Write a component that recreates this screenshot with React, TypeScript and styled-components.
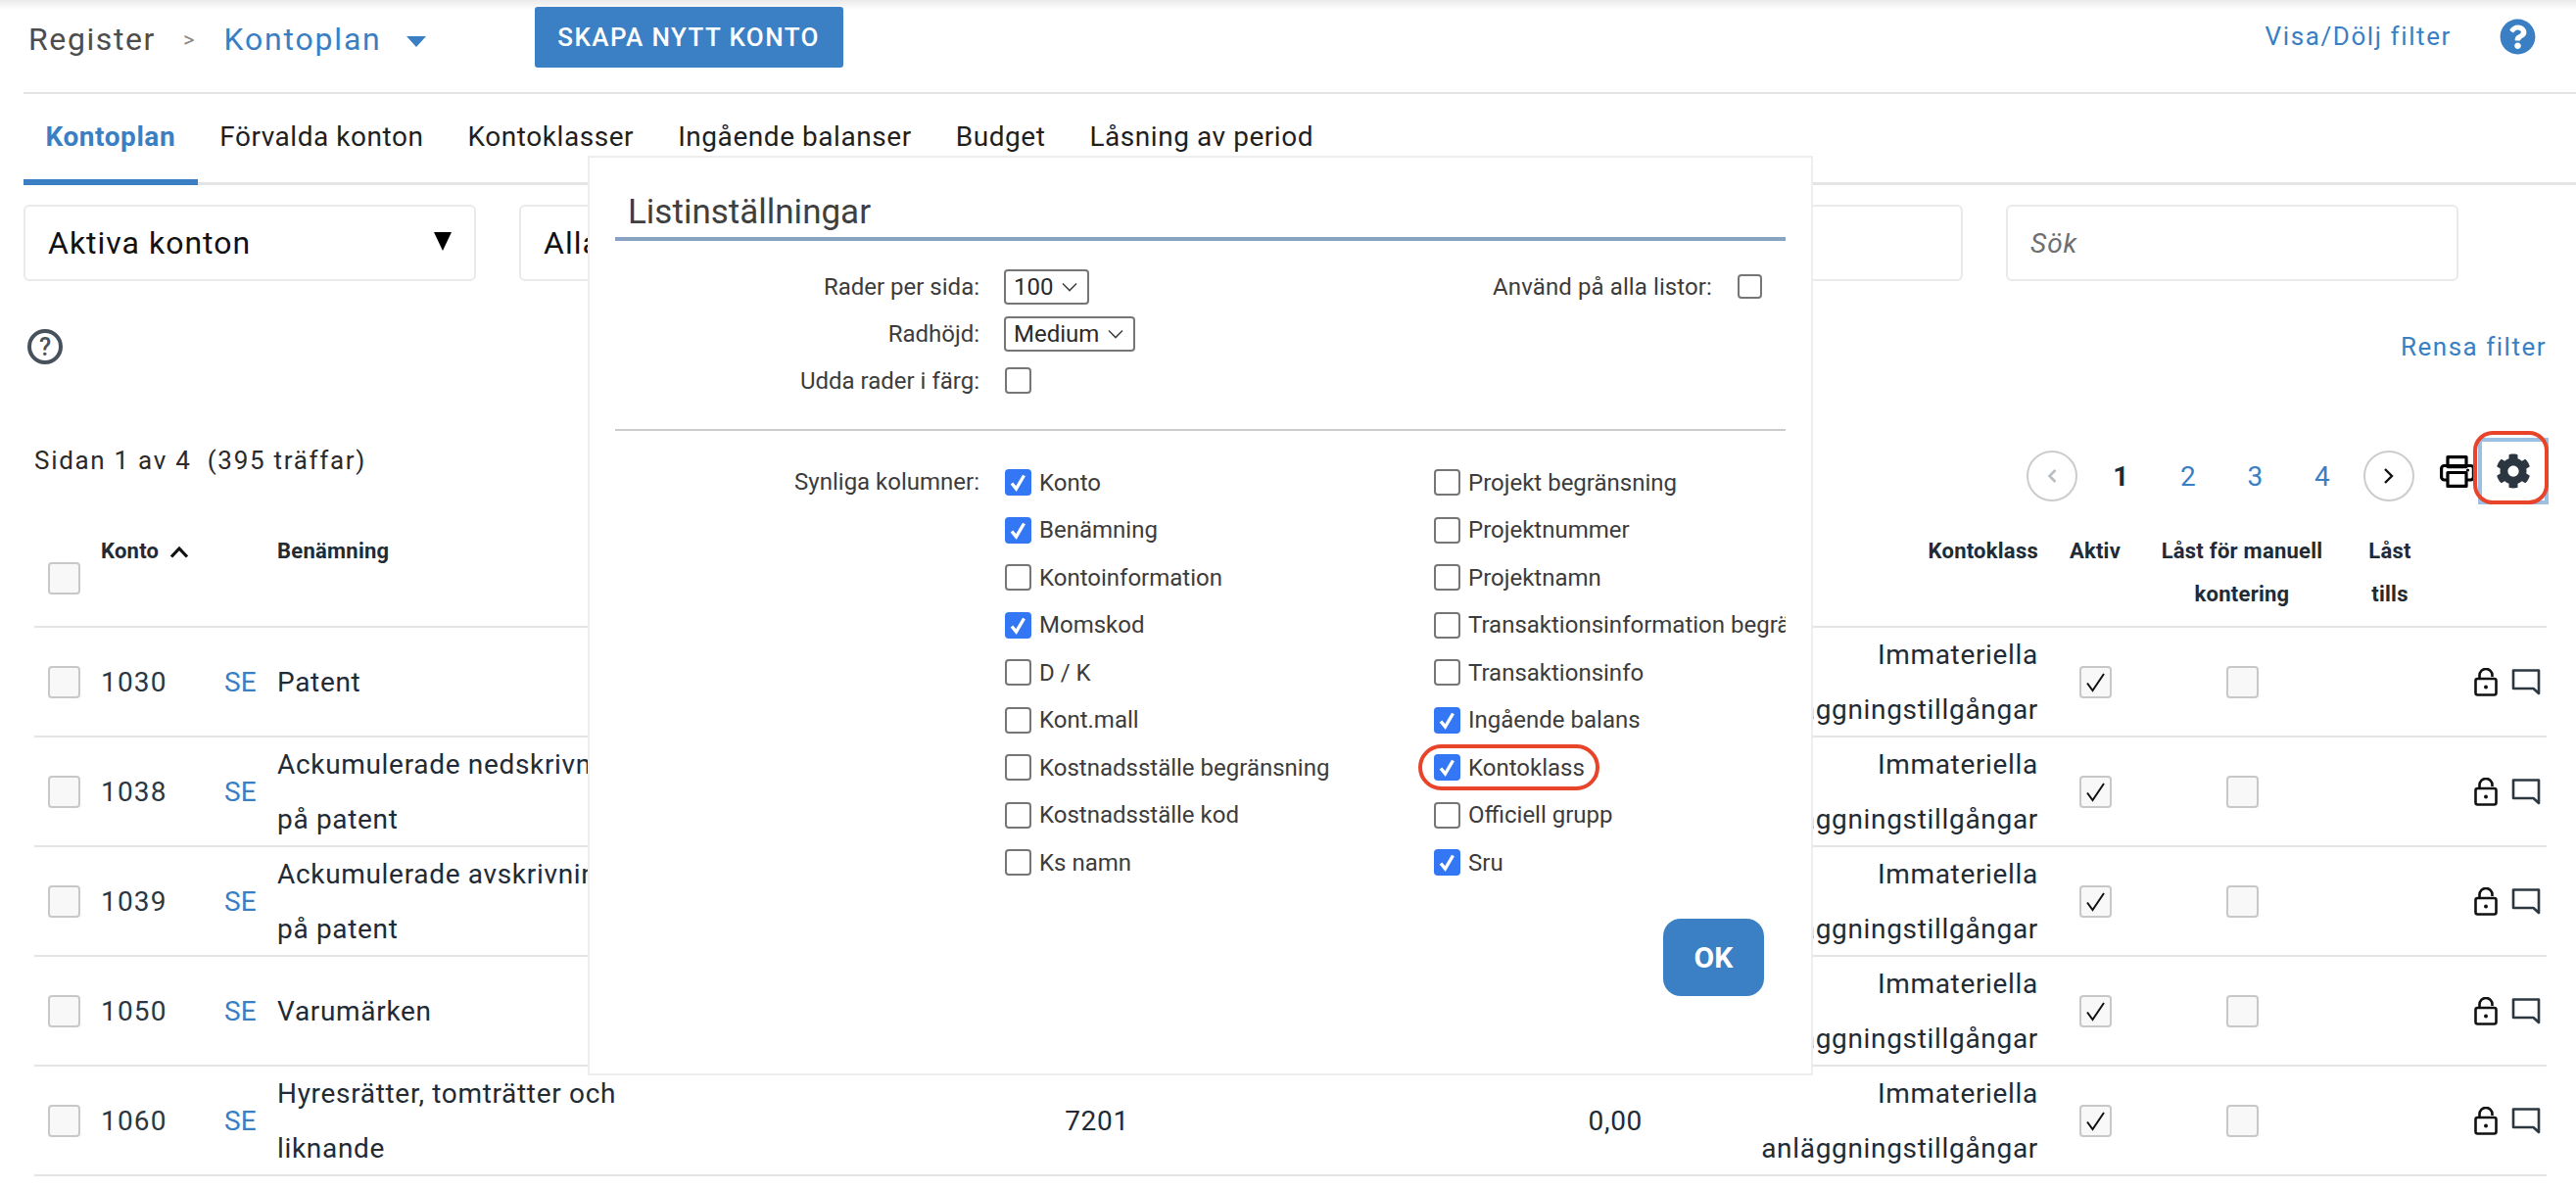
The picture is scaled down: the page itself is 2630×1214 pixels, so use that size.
import React from 'react';
import styled, { createGlobalStyle } from 'styled-components';
import { FaCog, FaQuestionCircle } from 'react-icons/fa';

const Global = createGlobalStyle`
  html, body { margin: 0; padding: 0; background: #fff; }
  body { font-family: Roboto, "Liberation Sans", sans-serif; color: #212b36; }
  * { box-sizing: border-box; }
`;

const Page = styled.div`
  position: relative;
  width: 2630px;
  height: 1214px;
  overflow: hidden;
  background: linear-gradient(#eaeaea 0, #fff 10px);
`;

const Header = styled.header`
  display: flex;
  align-items: center;
  height: 96px;
  margin-left: 24px;
  padding: 0 41px 14px 5px;
  border-bottom: 2px solid #e4e4e4;
`;
const Crumb = styled.span`
  font-size: 32px;
  letter-spacing: 1.6px;
  color: #4d4d4d;
`;
const CrumbSep = styled.span`
  font-size: 22px;
  color: #888;
  margin: 0 30px 0 28px;
`;
const CrumbLink = styled.span`
  font-size: 32px;
  letter-spacing: 1.8px;
  color: #3a7fc3;
`;
const CrumbCaret = styled.span`
  width: 0;
  height: 0;
  margin: 4px 0 0 25px;
  border-left: 10px solid transparent;
  border-right: 10px solid transparent;
  border-top: 11px solid #3a7fc3;
`;
const CreateButton = styled.button`
  position: relative;
  top: -2px;
  height: 62px;
  width: 315px;
  margin: 0 0 0 111px;
  border: 0;
  border-radius: 3px;
  background: #3b7fc4;
  color: #fff;
  font: 500 26px Roboto, sans-serif;
  letter-spacing: 1.4px;
`;
const Spacer = styled.div`flex: 1;`;
const FilterToggle = styled.span`
  margin: 0 49px 6px 0;
  font-size: 26px;
  letter-spacing: 1.6px;
  color: #3a7fc3;
`;
const HelpBadge = styled(FaQuestionCircle)`
  width: 37px;
  height: 37px;
  margin-bottom: 6px;
  color: #3a7fc3;
`;

const Tabs = styled.nav`
  display: flex;
  height: 93px;
  margin-left: 24px;
  border-bottom: 3px solid #e4e4e4;
`;
const Tab = styled.div<{ $active?: boolean }>`
  height: 93px;
  padding: 27px 22.5px 0;
  font-size: 28px;
  letter-spacing: 0.55px;
  font-weight: ${(p) => (p.$active ? 700 : 400)};
  color: ${(p) => (p.$active ? '#3a7fc3' : '#1f1f1f')};
  border-bottom: ${(p) => (p.$active ? '6px solid #3a7fc3' : '0')};
`;

const Filters = styled.div`
  display: flex;
  gap: 44px;
  margin: 20px 0 0 24px;
`;
const FilterBox = styled.div<{ $italic?: boolean }>`
  display: flex;
  align-items: center;
  justify-content: space-between;
  width: 462px;
  height: 78px;
  padding: 0 24px 0 23px;
  border: 2px solid #eaeaea;
  border-radius: 6px;
  font-size: ${(p) => (p.$italic ? '28px' : '32px')};
  font-style: ${(p) => (p.$italic ? 'italic' : 'normal')};
  color: ${(p) => (p.$italic ? '#6f6f6f' : '#111')};
  letter-spacing: 1px;
`;
const FilterArrow = styled.span`
  width: 0;
  height: 0;
  margin-right: -1px;
  margin-top: -4px;
  border-left: 9px solid transparent;
  border-right: 9px solid transparent;
  border-top: 19px solid #000;
`;

const FilterTools = styled.div`
  display: flex;
  align-items: center;
  justify-content: space-between;
  height: 36px;
  margin: 49px 30px 0 28px;
`;
const OutlineHelp = styled.span`
  display: flex;
  align-items: center;
  justify-content: center;
  width: 36px;
  height: 36px;
  border: 4px solid #46515c;
  border-radius: 50%;
  font-size: 25px;
  font-weight: 500;
  color: #46515c;
`;
const ClearLink = styled.span`
  font-size: 26px;
  letter-spacing: 1.5px;
  color: #3a7fc3;
`;

const ListBar = styled.div`
  display: flex;
  align-items: center;
  height: 52px;
  margin: 88px 28px 0 35px;
`;
const Count = styled.span`
  margin-bottom: 32px;
  font-size: 26px;
  letter-spacing: 1.7px;
  color: #2a2a2a;
  white-space: pre;
`;
const PageCircle = styled.span`
  display: flex;
  align-items: center;
  justify-content: center;
  width: 52px;
  height: 52px;
  border: 2px solid #ccc;
  border-radius: 50%;
`;
const PageNum = styled.span<{ $current?: boolean }>`
  width: 68.5px;
  text-align: center;
  font-size: 28px;
  font-weight: ${(p) => (p.$current ? 700 : 400)};
  color: ${(p) => (p.$current ? '#212b36' : '#3a7fc3')};
`;
const PageNums = styled.div`
  display: flex;
  margin: 0 8px 0 10px;
`;
const PrintIcon = styled.svg`
  flex: none;
  width: 36px;
  height: 33px;
  margin: -10px 0 0 26px;
`;
const GearBox = styled.span`
  display: flex;
  flex: none;
  align-items: center;
  justify-content: center;
  position: relative;
  width: 72px;
  height: 68px;
  margin: -10px 0 0 3px;
  border: 4px solid #9cc0e4;
  background: #fff;
`;
const GearIcon = styled(FaCog)`
  width: 36px;
  height: 36px;
  color: #2b3640;
`;
const GearRing = styled.span`
  position: absolute;
  left: -9px;
  top: -11px;
  width: 77px;
  height: 75px;
  border: 4px solid #e8442a;
  border-radius: 20px;
`;

const COLUMNS = '68px 126px 54px 400px 874px 130px 404px 96px 204px 98px 111px';

const Table = styled.div`
  margin: 29px 30px 0 35px;
`;
const HeadRow = styled.div`
  display: grid;
  grid-template-columns: ${COLUMNS};
  height: 100px;
  border-bottom: 2px solid #e4e4e4;
`;
const HeadCell = styled.div<{ $align?: string }>`
  font-size: 22px;
  font-weight: 700;
  line-height: 44px;
  letter-spacing: 0.25px;
  text-align: ${(p) => p.$align || 'left'};
  padding-right: ${(p) => (p.$align === 'right' ? '10px' : '0')};
`;
const SortMark = styled.svg`
  width: 20px;
  height: 13px;
  margin-left: 11px;
`;
const SelectCell = styled.div`
  display: flex;
  align-items: center;
  padding: 0 0 0 14px;
`;
const Row = styled.div`
  display: grid;
  grid-template-columns: ${COLUMNS};
  align-items: center;
  height: 112px;
  border-bottom: 2px solid #e4e4e4;
  font-size: 28px;
  line-height: 55.5px;
  letter-spacing: 0.68px;
`;
const Code = styled.div`
  color: #2d3740;
  letter-spacing: 1.2px;
`;
const Flag = styled.div`color: #3a7fc3; letter-spacing: 0;`;
const Cell = styled.div<{ $align?: string }>`
  text-align: ${(p) => p.$align || 'left'};
  padding-right: ${(p) => (p.$align === 'right' ? '10px' : '0')};
`;
const TableBox = styled.span<{ $center?: boolean }>`
  display: flex;
  align-items: center;
  justify-content: center;
  width: 33px;
  height: 33px;
  ${(p) => (p.$center ? 'margin: 0 auto;' : '')}
  border: 2px solid #c6c8ca;
  border-radius: 4px;
  background: #f8f8f8;
`;
const RowActions = styled.div`
  display: flex;
  align-items: center;
  gap: 14px;
  padding-left: 37px;
`;

const Dialog = styled.div`
  position: absolute;
  left: 600px;
  top: 159px;
  width: 1251px;
  height: 939px;
  padding: 0 26px;
  background: #fff;
  border: 2px solid #eeeeee;
  color: #3c3c3c;
`;
const DialogTitle = styled.h2`
  height: 85px;
  margin: 0;
  padding: 35px 0 0 13px;
  border-bottom: 4px solid #8aa2c2;
  font-size: 35px;
  line-height: 42px;
  font-weight: 400;
  color: #3f3f3f;
`;
const Settings = styled.div`
  display: flex;
  justify-content: space-between;
  height: 194px;
  padding-top: 29px;
  border-bottom: 2px solid #cccccc;
`;
const SettingsColumn = styled.div`
  display: flex;
  flex-direction: column;
  gap: 13px;
`;
const SettingRow = styled.div`
  display: flex;
  align-items: center;
  height: 35px;
`;
const SettingLabel = styled.span`
  width: 372px;
  margin-right: 26px;
  text-align: right;
  font-size: 24px;
`;
const Dropdown = styled.span`
  display: flex;
  align-items: center;
  height: 36px;
  margin-left: -1px;
  padding: 0 10px 0 8px;
  gap: 9px;
  border: 2px solid #767676;
  border-radius: 4px;
  font-size: 24px;
  color: #2a2a2a;
`;
const ApplyAll = styled.div`
  display: flex;
  align-items: center;
  gap: 26px;
  height: 35px;
  padding-right: 24px;
  font-size: 24px;
  letter-spacing: 0.1px;
`;
const Box = styled.span<{ $checked?: boolean; $size?: number }>`
  display: flex;
  flex: none;
  align-items: center;
  justify-content: center;
  width: ${(p) => p.$size || 27}px;
  height: ${(p) => p.$size || 27}px;
  border-radius: 4px;
  border: ${(p) => (p.$checked ? '0' : '2px solid #767676')};
  background: ${(p) => (p.$checked ? '#3477f5' : '#fff')};
`;
const ColumnsArea = styled.div`
  display: flex;
  padding-top: 35px;
`;
const ColumnsLabel = styled(SettingLabel)`
  height: 35px;
  line-height: 35px;
`;
const ColumnGrid = styled.div`
  display: grid;
  grid-template-rows: repeat(9, 48.5px);
  grid-auto-flow: column;
  grid-template-columns: 438px 359px;
  width: 797px;
  overflow: hidden;
`;
const ColumnItem = styled.label`
  position: relative;
  display: flex;
  align-items: center;
  gap: 8px;
  height: 35px;
  font-size: 24px;
  white-space: nowrap;
`;
const ColumnRing = styled.span`
  position: absolute;
  left: -16px;
  top: -6px;
  width: 185px;
  height: 47px;
  border: 4px solid #e8442a;
  border-radius: 24px;
`;
const OkButton = styled.button`
  position: absolute;
  left: 1096px;
  top: 777px;
  width: 103px;
  height: 79px;
  border: 0;
  border-radius: 18px;
  background: #3b7fc4;
  color: #fff;
  font: 700 30px Roboto, sans-serif;
`;

const Caret = () => (
  <svg width="16" height="10" viewBox="0 0 16 10" fill="none" stroke="#444" strokeWidth="1.6">
    <path d="M1 1.5 8 8.5 15 1.5" />
  </svg>
);
const Check = () => (
  <svg width="17" height="19" viewBox="0 0 17 19" fill="none" stroke="#fff" strokeWidth="3.4">
    <path d="M2 10.5 6.5 16 14.5 2.5" />
  </svg>
);
const ThinCheck = () => (
  <svg width="21" height="22" viewBox="0 0 21 22" fill="none" stroke="#111" strokeWidth="2">
    <path d="M2 11.5 7.5 19 19 2" />
  </svg>
);
const LockOpen = () => (
  <svg width="24" height="29" viewBox="0 0 24 29" fill="none" stroke="#111" strokeWidth="2.6">
    <path d="M5.5 11V7.5a6.5 6.5 0 0 1 13 0V9" />
    <rect x="1.5" y="11" width="21" height="16.5" rx="2" />
    <circle cx="12" cy="19.5" r="2" fill="#111" stroke="none" />
  </svg>
);
const Comment = () => (
  <svg width="30" height="27" viewBox="0 0 30 27" fill="none" stroke="#2d3740" strokeWidth="2.6">
    <path d="M2 1.5H28V25L22.5 20H2Z" strokeLinejoin="round" />
  </svg>
);

const tabs = ['Kontoplan', 'Förvalda konton', 'Kontoklasser', 'Ingående balanser', 'Budget', 'Låsning av period'];

const leftCols: [string, boolean][] = [
  ['Konto', true],
  ['Benämning', true],
  ['Kontoinformation', false],
  ['Momskod', true],
  ['D / K', false],
  ['Kont.mall', false],
  ['Kostnadsställe begränsning', false],
  ['Kostnadsställe kod', false],
  ['Ks namn', false],
];
const rightCols: [string, boolean][] = [
  ['Projekt begränsning', false],
  ['Projektnummer', false],
  ['Projektnamn', false],
  ['Transaktionsinformation begränsning', false],
  ['Transaktionsinfo', false],
  ['Ingående balans', true],
  ['Kontoklass', true],
  ['Officiell grupp', false],
  ['Sru', true],
];

const rows = [
  { code: '1030', name: 'Patent' },
  { code: '1038', name: 'Ackumulerade nedskrivningar på patent' },
  { code: '1039', name: 'Ackumulerade avskrivningar på patent' },
  { code: '1050', name: 'Varumärken' },
  { code: '1060', name: 'Hyresrätter, tomträtter och liknande', sru: '7201', balance: '0,00' },
];

export default function App() {
  return (
    <Page>
      <Global />
      <Header>
        <Crumb>Register</Crumb>
        <CrumbSep>&gt;</CrumbSep>
        <CrumbLink>Kontoplan</CrumbLink>
        <CrumbCaret />
        <CreateButton>SKAPA NYTT KONTO</CreateButton>
        <Spacer />
        <FilterToggle>Visa/Dölj filter</FilterToggle>
        <HelpBadge />
      </Header>
      <Tabs>
        {tabs.map((t, i) => (
          <Tab key={t} $active={i === 0}>{t}</Tab>
        ))}
      </Tabs>
      <Filters>
        <FilterBox>Aktiva konton<FilterArrow /></FilterBox>
        <FilterBox>Alla<FilterArrow /></FilterBox>
        <FilterBox />
        <FilterBox />
        <FilterBox $italic>Sök</FilterBox>
      </Filters>
      <FilterTools>
        <OutlineHelp>?</OutlineHelp>
        <ClearLink>Rensa filter</ClearLink>
      </FilterTools>
      <ListBar>
        <Count>Sidan 1 av 4  (395 träffar)</Count>
        <Spacer />
        <PageCircle>
          <svg width="12" height="16" viewBox="0 0 12 16" fill="none" stroke="#b8bec4" strokeWidth="2.6"><path d="M9.5 2 3.5 8l6 6" /></svg>
        </PageCircle>
        <PageNums>
          <PageNum $current>1</PageNum>
          <PageNum>2</PageNum>
          <PageNum>3</PageNum>
          <PageNum>4</PageNum>
        </PageNums>
        <PageCircle>
          <svg width="12" height="18" viewBox="0 0 12 18" fill="none" stroke="#111" strokeWidth="2.4"><path d="M2 2l7 7-7 7" /></svg>
        </PageCircle>
        <PrintIcon viewBox="0 0 36 33" fill="none" stroke="#000" strokeWidth="3.2" strokeLinejoin="round">
          <rect x="8" y="1.6" width="19" height="10" />
          <rect x="1.6" y="10.5" width="32.8" height="14.5" rx="3" />
          <rect x="8" y="17.5" width="19" height="13.9" fill="#fff" />
          <circle cx="28.5" cy="15" r="1.6" fill="#000" stroke="none" />
        </PrintIcon>
        <GearBox>
          <GearIcon />
          <GearRing />
        </GearBox>
      </ListBar>
      <Table>
        <HeadRow>
          <SelectCell><TableBox /></SelectCell>
          <HeadCell>
            Konto
            <SortMark viewBox="0 0 20 13" fill="none" stroke="#111" strokeWidth="3.2"><path d="M2 11.5 10 3l8 8.5" /></SortMark>
          </HeadCell>
          <HeadCell />
          <HeadCell>Benämning</HeadCell>
          <HeadCell />
          <HeadCell />
          <HeadCell $align="right">Kontoklass</HeadCell>
          <HeadCell $align="center">Aktiv</HeadCell>
          <HeadCell $align="center">Låst för manuell kontering</HeadCell>
          <HeadCell $align="center">Låst<br />tills</HeadCell>
          <HeadCell />
        </HeadRow>
        {rows.map((r) => (
          <Row key={r.code}>
            <SelectCell><TableBox /></SelectCell>
            <Code>{r.code}</Code>
            <Flag>SE</Flag>
            <Cell>{r.name}</Cell>
            <Cell $align="center">{r.sru}</Cell>
            <Cell $align="right">{r.balance}</Cell>
            <Cell $align="right">Immateriella anläggningstillgångar</Cell>
            <Cell><TableBox $center><ThinCheck /></TableBox></Cell>
            <Cell><TableBox $center /></Cell>
            <Cell />
            <RowActions><LockOpen /><Comment /></RowActions>
          </Row>
        ))}
      </Table>
      <Dialog>
        <DialogTitle>Listinställningar</DialogTitle>
        <Settings>
          <SettingsColumn>
            <SettingRow>
              <SettingLabel>Rader per sida:</SettingLabel>
              <Dropdown>100 <Caret /></Dropdown>
            </SettingRow>
            <SettingRow>
              <SettingLabel>Radhöjd:</SettingLabel>
              <Dropdown>Medium <Caret /></Dropdown>
            </SettingRow>
            <SettingRow>
              <SettingLabel>Udda rader i färg:</SettingLabel>
              <Box />
            </SettingRow>
          </SettingsColumn>
          <ApplyAll>Använd på alla listor: <Box $size={25} /></ApplyAll>
        </Settings>
        <ColumnsArea>
          <ColumnsLabel>Synliga kolumner:</ColumnsLabel>
          <ColumnGrid>
            {[...leftCols, ...rightCols].map(([name, on]) => (
              <ColumnItem key={name}>
                <Box $checked={on}>{on && <Check />}</Box>
                {name}
                {name === 'Kontoklass' && <ColumnRing />}
              </ColumnItem>
            ))}
          </ColumnGrid>
        </ColumnsArea>
        <OkButton>OK</OkButton>
      </Dialog>
    </Page>
  );
}
